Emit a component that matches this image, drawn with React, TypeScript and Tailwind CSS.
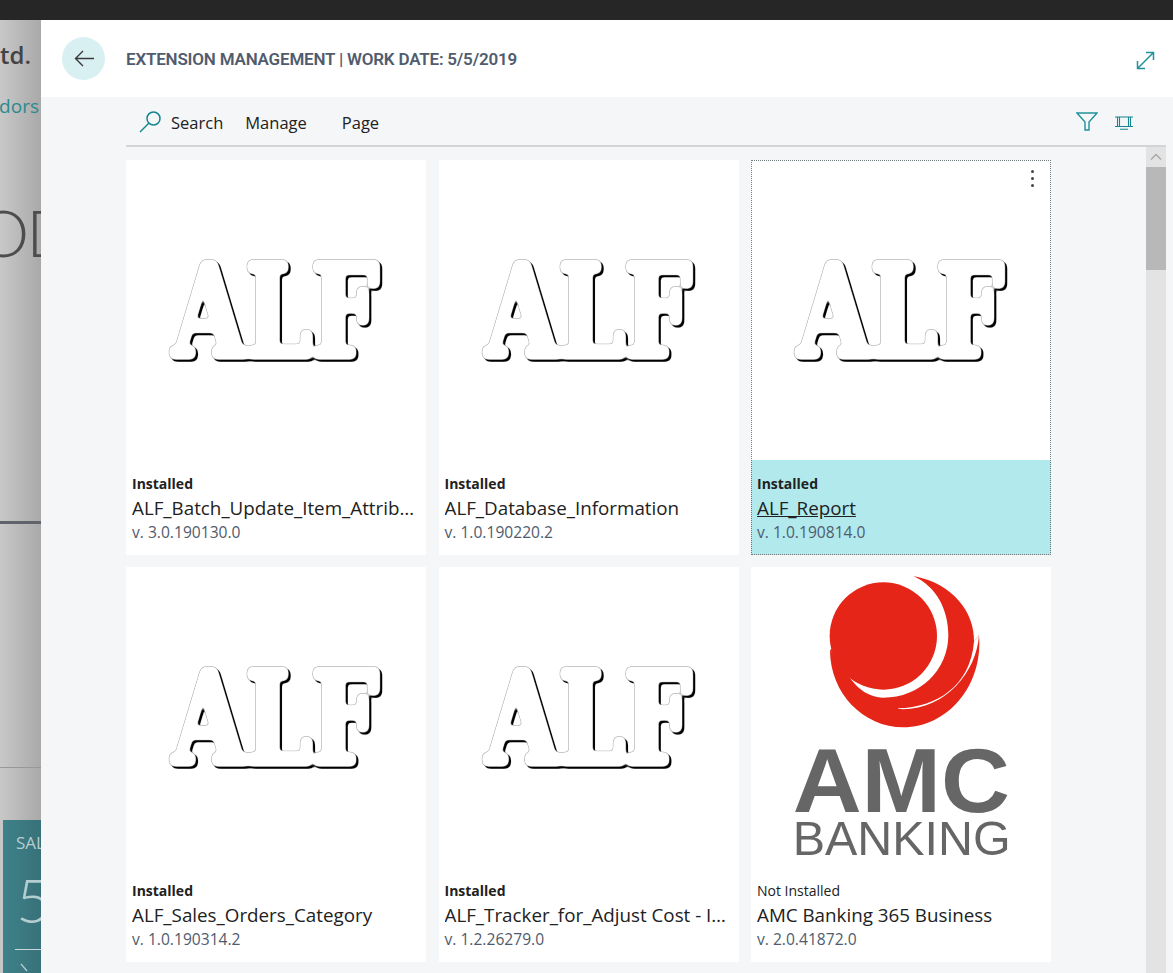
type Extension = {
  status: string;
  name: string;
  version: string;
  logo: "alf" | "amc";
  selected?: boolean;
};

const extensions: Extension[] = [
  { status: "Installed", name: "ALF_Batch_Update_Item_Attributes", version: "v. 3.0.190130.0", logo: "alf" },
  { status: "Installed", name: "ALF_Database_Information", version: "v. 1.0.190220.2", logo: "alf" },
  { status: "Installed", name: "ALF_Report", version: "v. 1.0.190814.0", logo: "alf", selected: true },
  { status: "Installed", name: "ALF_Sales_Orders_Category", version: "v. 1.0.190314.2", logo: "alf" },
  { status: "Installed", name: "ALF_Tracker_for_Adjust Cost - Item Entries", version: "v. 1.2.26279.0", logo: "alf" },
  { status: "Not Installed", name: "AMC Banking 365 Business", version: "v. 2.0.41872.0", logo: "amc" },
];

function AlfLogo({ id }: { id: string }) {
  return (
    <svg width="300" height="300" viewBox="0 0 300 300">
      <defs>
        <filter id={id} x="-20%" y="-20%" width="140%" height="140%" colorInterpolationFilters="sRGB">
          <feGaussianBlur in="SourceAlpha" stdDeviation="2.4" result="soft" />
          <feComponentTransfer in="soft" result="fat">
            <feFuncA type="linear" slope="10" intercept="-1.6" />
          </feComponentTransfer>
          <feComponentTransfer in="soft" result="edge">
            <feFuncA type="linear" slope="10" intercept="-1.1" />
          </feComponentTransfer>
          <feOffset in="edge" dx="2" dy="2.2" result="moved" />
          <feFlood floodColor="#000000" />
          <feComposite in2="moved" operator="in" result="black" />
          <feFlood floodColor="#a39b9f" />
          <feComposite in2="edge" operator="in" result="line" />
          <feFlood floodColor="#ffffff" />
          <feComposite in2="fat" operator="in" result="white" />
          <feMerge>
            <feMergeNode in="black" />
            <feMergeNode in="line" />
            <feMergeNode in="white" />
          </feMerge>
        </filter>
      </defs>
      <text
        x="47"
        y="196"
        textLength="205"
        lengthAdjust="spacingAndGlyphs"
        stroke="#000000"
        strokeWidth="2.6"
        filter={`url(#${id})`}
        style={{ fontFamily: '"DejaVu Serif", serif', fontWeight: 700, fontSize: 128 }}
      >
        ALF
      </text>
    </svg>
  );
}

function AmcLogo() {
  return (
    <svg width="300" height="300" viewBox="3 -9 900 900">
      <path
        fill="#e42518"
        d="M490 18C610 40 675 130 672 215L687 195C700 350 590 472 460 472C340 472 240 370 240 240L283 292C305 345 350 383 400 383C510 383 595 300 595 195C595 120 560 50 490 18Z"
      />
      <path fill="#e42518" d="M240 240L283 292L300 200Z" />
      <circle cx="400" cy="198" r="161" fill="#e42518" />
      <path fill="#ffffff" d="M445 415C560 410 660 350 672 215L687 195C680 310 580 425 445 417Z" />
      <text
        x="128"
        y="725"
        textLength="652"
        lengthAdjust="spacingAndGlyphs"
        fill="#666666"
        style={{ fontFamily: '"Liberation Sans", sans-serif', fontWeight: 700, fontSize: 275 }}
      >
        AMC
      </text>
      <text
        x="128"
        y="856"
        textLength="654"
        lengthAdjust="spacingAndGlyphs"
        fill="#666666"
        style={{ fontFamily: '"Liberation Sans", sans-serif', fontWeight: 400, fontSize: 146 }}
      >
        BANKING
      </text>
    </svg>
  );
}

function ExtensionCard({ item, index }: { item: Extension; index: number }) {
  return (
    <div
      className={`relative h-[394.5px] w-[300px] bg-white flex flex-col ${
        item.selected ? "outline outline-1 -outline-offset-1 outline-dotted outline-[#6f7a7c]" : ""
      }`}
    >
      {item.selected && (
        <div className="absolute right-[17px] top-[10px] flex flex-col gap-[4px]">
          <span className="w-[3px] h-[3px] rounded-full bg-[#444]" />
          <span className="w-[3px] h-[3px] rounded-full bg-[#444]" />
          <span className="w-[3px] h-[3px] rounded-full bg-[#444]" />
        </div>
      )}
      <div className="h-[300px] shrink-0">
        {item.logo === "alf" ? <AlfLogo id={`alf-${index}`} /> : <AmcLogo />}
      </div>
      <div className={`flex-1 px-[6px] pt-[15px] ${item.selected ? "bg-[#b1e9ec]" : ""}`}>
        <div
          className={`text-[14px] leading-[18px] text-[#212121] ${
            item.status === "Installed" ? "font-bold" : "font-normal"
          }`}
        >
          {item.status}
        </div>
        <div
          className={`mt-[2px] text-[18.8px] leading-[26px] text-[#212121] truncate pr-[3px] ${
            item.selected ? "underline" : ""
          }`}
        >
          {item.name}
        </div>
        <div className="text-[15.6px] leading-[22px] text-[#505c6d]">{item.version}</div>
      </div>
    </div>
  );
}

function BackgroundSliver() {
  return (
    <div className="w-[41px] shrink-0 overflow-hidden bg-linear-to-r from-[#c8c8c8] to-[#a9a9a9] flex flex-col">
      <div className="mt-[20px] h-[30px] pr-[10px] flex justify-end whitespace-nowrap text-[24px] leading-[30px] font-semibold text-[#444]">
        Ltd.
      </div>
      <div className="mt-[23px] h-[26px] pr-[2px] flex justify-end whitespace-nowrap text-[19px] leading-[26px] text-[#2b8a8e]">
        Vendors
      </div>
      <div className="mt-[78px] h-[70px] -ml-[23px] whitespace-nowrap text-[66px] leading-[70px] tracking-[-3px] font-light text-[#4d4d4d] font-['Lato',sans-serif]">
        OD
      </div>
      <div className="mt-[254px] h-[3px] bg-[#60646a]" />
      <div className="mt-[243px] h-px bg-[#989898]" />
      <div className="mt-[52px] ml-[3px] flex-1 bg-linear-to-r from-[#3f8289] to-[#38717a] pl-[13px] overflow-hidden">
        <div className="mt-[12px] whitespace-nowrap text-[17px] leading-[22px] text-[#b4cdd0]">SALES</div>
        <div className="mt-[14px] whitespace-nowrap text-[62px] leading-[62px] font-light text-[#b4cdd0] font-['Lato',sans-serif]">
          5
        </div>
        <div className="mt-[19px] h-px -ml-px bg-[#c9d9db]" />
        <svg width="14" height="14" viewBox="0 0 14 14" className="mt-[13px] ml-[3px]">
          <path d="M2 1l6 7" fill="none" stroke="#b4cdd0" strokeWidth="1.3" />
        </svg>
      </div>
    </div>
  );
}

export default function App() {
  return (
    <div className="w-[1173px] h-[973px] overflow-hidden flex flex-col font-['Open_Sans',sans-serif]">
      <div className="h-[20px] shrink-0 bg-[#262626]" />
      <div className="flex flex-1 min-h-0">
        <BackgroundSliver />
        <div className="flex-1 min-w-0 flex flex-col bg-[#f5f6f8]">
          <div className="h-[77px] shrink-0 bg-white flex items-center pl-[21px] pr-[18px]">
            <div className="w-[43px] h-[43px] rounded-full bg-[#d9f0f2] flex items-center justify-center">
              <svg width="20" height="17" viewBox="0 0 20 17" fill="none" stroke="#3a3a3a" strokeWidth="1.4">
                <path d="M20 8.5H1.5M9 1L1.5 8.5L9 16" />
              </svg>
            </div>
            <div className="ml-[21px] mt-[3px] flex-1 text-[17px] font-semibold tracking-[-0.2px] text-[#505c6d] font-['Roboto',sans-serif] whitespace-nowrap">
              EXTENSION MANAGEMENT | WORK DATE: 5/5/2019
            </div>
            <svg width="19" height="19" viewBox="0 0 19 19" fill="none" stroke="#1f929b" strokeWidth="1.5" className="mt-[3px]">
              <path d="M1.5 17.5L17.5 1.5M10 1.5h7.5V9M1.5 10v7.5H9" />
            </svg>
          </div>
          <div className="h-[50px] shrink-0 ml-[85px] mr-[7px] border-b-2 border-[#d3d4d6] flex items-center pl-[13px] pr-[33px] text-[16.5px] text-[#212121]">
            <svg width="23" height="23" viewBox="0 0 23 23" fill="none" stroke="#14858e" strokeWidth="1.5">
              <circle cx="14.5" cy="8.5" r="6.5" />
              <path d="M10 13L1 22" />
            </svg>
            <span className="ml-[9px] mt-[4px]">Search</span>
            <span className="ml-[22px] mt-[4px]">Manage</span>
            <span className="ml-[35px] mt-[4px]">Page</span>
            <div className="ml-auto flex items-center gap-[17px]">
              <svg width="22" height="19" viewBox="0 0 22 19" fill="none" stroke="#1f929b" strokeWidth="1.4">
                <path d="M1 1h20l-8 9v8H9v-8z" />
              </svg>
              <svg width="18" height="14" viewBox="0 0 18 14" fill="none" stroke="#14858e" strokeWidth="1.1" className="mt-[4px]">
                <path d="M0 1h18M0 10.5h18M2.5 1v9.5M15.5 1v9.5M4.5 1v9.5M13.5 1v9.5M5 13.3h8" />
              </svg>
            </div>
          </div>
          <div className="flex flex-1 min-h-0 ml-[85px] mr-[7px]">
            <div className="flex-1 pt-[13px]">
              <div className="grid grid-cols-[300px_300px_300px] gap-x-[12.5px] gap-y-[12.5px]">
                {extensions.map((item, index) => (
                  <ExtensionCard key={item.name} item={item} index={index} />
                ))}
              </div>
            </div>
            <div className="w-[20px] shrink-0 bg-[#e3e3e3] flex flex-col">
              <div className="h-[20px] flex items-center justify-center">
                <svg width="12" height="8" viewBox="0 0 12 8" fill="none" stroke="#a5a5a5" strokeWidth="1.3">
                  <path d="M1 6.5L6 1.5l5 5" />
                </svg>
              </div>
              <div className="h-[103px] bg-[#b8b8b8]" />
            </div>
          </div>
        </div>
      </div>
    </div>
  );
}
